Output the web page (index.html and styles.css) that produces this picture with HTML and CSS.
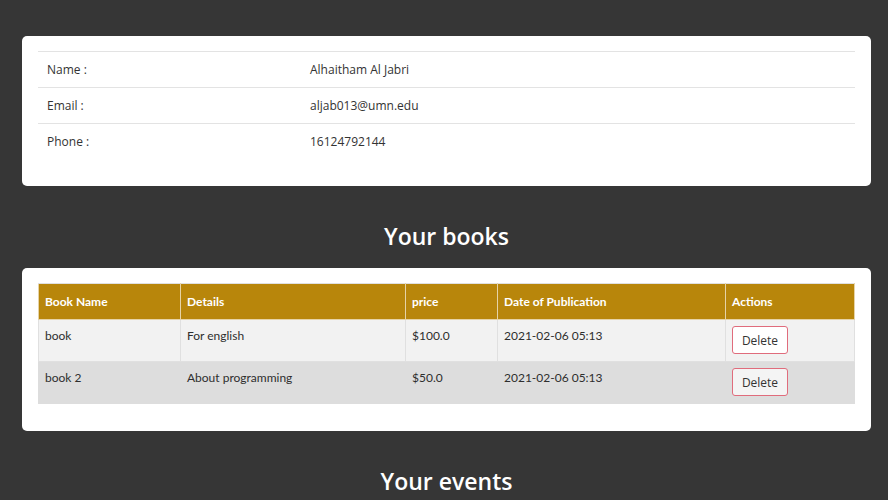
FILE: index.html
```html
<!DOCTYPE html>
<html>
<head>
<meta charset="utf-8">
<link rel="stylesheet" href="styles.css">
</head>
<body>
<main class="page">
  <section class="card profile-card">
    <table class="profile">
      <tr><td class="label">Name :</td><td>Alhaitham Al Jabri</td></tr>
      <tr><td class="label">Email :</td><td>aljab013@umn.edu</td></tr>
      <tr><td class="label">Phone :</td><td>16124792144</td></tr>
    </table>
  </section>
  <h2 class="section-title">Your books</h2>
  <section class="card books-card">
    <table class="books">
      <thead>
        <tr>
          <th class="c1">Book Name</th>
          <th class="c2">Details</th>
          <th class="c3">price</th>
          <th class="c4">Date of Publication</th>
          <th class="c5">Actions</th>
        </tr>
      </thead>
      <tbody>
        <tr class="odd">
          <td>book</td><td>For english</td><td>$100.0</td><td>2021-02-06 05:13</td>
          <td><button class="delete">Delete</button></td>
        </tr>
        <tr class="even">
          <td>book 2</td><td>About programming</td><td>$50.0</td><td>2021-02-06 05:13</td>
          <td><button class="delete">Delete</button></td>
        </tr>
      </tbody>
    </table>
  </section>
  <h2 class="section-title">Your events</h2>
</main>
</body>
</html>
```
FILE: styles.css
```css
html, body {
  margin: 0;
  padding: 0;
  background: #363636;
}
body {
  font-family: "Open Sans", "Liberation Sans", sans-serif;
  color: #333;
}
.page {
  padding: 36px 17px 0 22px;
}
.card {
  background: #fff;
  border-radius: 5px;
  padding: 15px 16px;
}
.profile-card {
  padding-bottom: 27px;
}
.profile {
  width: 100%;
  border-collapse: collapse;
  font-size: 12px;
  color: #333;
}
.profile td {
  border-top: 1px solid #e3e3e3;
  height: 35px;
  padding: 0 9px;
  vertical-align: middle;
}
.profile .label {
  width: 245px;
}
.section-title {
  margin: 0;
  height: 82px;
  box-sizing: border-box;
  text-align: center;
  color: #fff;
  font-size: 23px;
  font-weight: 600;
  line-height: 101px;
}
.books-card {
  padding-bottom: 27px;
}
.books {
  width: 100%;
  border-collapse: collapse;
  font-family: "Lato", "Open Sans", sans-serif;
  font-size: 12px;
  table-layout: fixed;
}
.books th {
  background: #b8860b;
  color: #fff;
  font-weight: 700;
  text-align: left;
  height: 35px;
  padding: 0 6px;
  border: 1px solid #e6d3a6;
  border-top: 1px solid #e0e0e0;
}
.books td {
  border: 1px solid #e0e0e0;
  vertical-align: top;
  padding: 8px 6px 0;
  height: 33px;
  color: #2e2e2e;
}
.books .odd td { background: #f2f2f2; }
.books .even td { background: #dddddd; border-color: #dddddd; }
.books .c1 { width: 129px; }
.books .c2 { width: 212px; }
.books .c3 { width: 79px; }
.books .c4 { width: 215px; }
.delete {
  font-family: "Open Sans", sans-serif;
  font-size: 12px;
  color: #333;
  background: #fff;
  border: 1px solid #e06c7c;
  border-radius: 3px;
  width: 56px;
  height: 28px;
  padding: 0;
  margin-top: -2px;
}
.books .even .delete { background: #f4f4f4; }
```
